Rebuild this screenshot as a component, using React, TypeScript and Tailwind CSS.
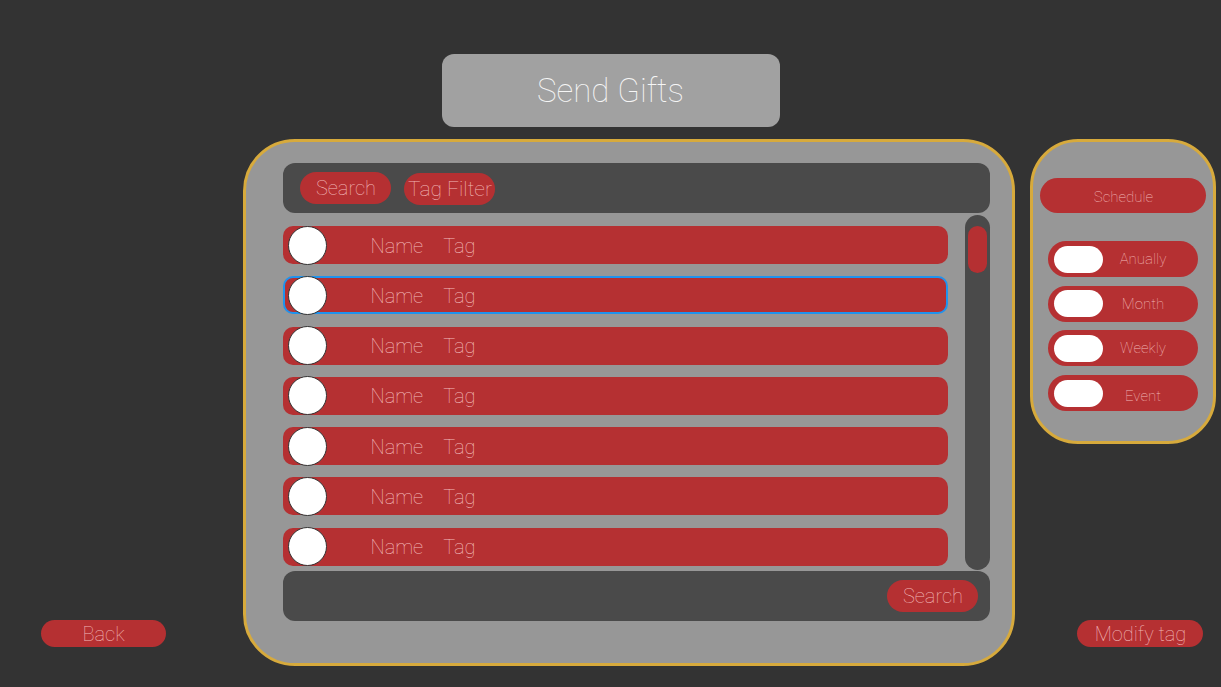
import React from "react";

const rows = [0, 1, 2, 3, 4, 5, 6];
const toggles = ["Anually", "Month", "Weekly", "Event"];

export default function App() {
  return (
    <div
      className="w-full h-[687px] bg-[#333333] flex flex-col overflow-hidden"
      style={{ fontFamily: "'Roboto Thin', 'Roboto Light', Roboto, 'Noto Sans', sans-serif" }}
    >
      <div className="flex justify-center pt-[54px]">
        <div className="w-[338px] h-[73px] rounded-[12px] bg-[#a1a1a1] flex items-center justify-center">
          <span className="text-[33px] font-thin text-[#f6f6f6] leading-none">Send Gifts</span>
        </div>
      </div>

      <div className="flex flex-row items-start mt-[12px]">
        {/* left column */}
        <div className="w-[244px] h-[527px] flex flex-col justify-end pb-[19px] pl-[41px]">
          <button className="w-[125px] h-[27px] rounded-full bg-[#b53032] text-[#f0b6b6] text-[20px] font-thin leading-none flex items-center justify-center">
            Back
          </button>
        </div>

        {/* main panel */}
        <div className="w-[772px] h-[527px] rounded-[52px] border-[3px] border-[#d7aa3c] bg-[#979797] pl-[37px] pr-[22px] pt-[21px] flex flex-col">
          <div className="h-[50px] rounded-[12px] bg-[#4a4a4a] flex items-start pt-[9px] pl-[17px] gap-[13px]">
            <button className="w-[91px] h-[32px] rounded-full bg-[#b53032] text-[#f0b6b6] text-[20px] font-thin leading-none flex items-center justify-center">
              Search
            </button>
            <button className="w-[91px] h-[32px] mt-[1px] rounded-full bg-[#b53032] text-[#f0b6b6] text-[21px] font-thin leading-none flex items-center justify-center">
              Tag Filter
            </button>
          </div>

          <div className="flex flex-row gap-[17px] h-[358px]">
            <div className="w-[666px] flex flex-col gap-[12.3px] pt-[13px]">
              {rows.map((i) => (
                <div
                  key={i}
                  className={
                    i === 1
                      ? "h-[38px] rounded-[10px] bg-[#b53032] border-2 border-[#1f93ee] flex items-center pl-[3px]"
                      : "h-[38px] rounded-[10px] bg-[#b53032] border-2 border-transparent flex items-center pl-[3px]"
                  }
                >
                  <div className="w-[39px] h-[39px] shrink-0 rounded-full bg-white border border-[#333]" />
                  <span className="ml-[43px] pt-[1px] text-[20px] font-thin text-[#f2baba] leading-none">Name</span>
                  <span className="ml-[20px] pt-[1px] text-[20px] font-thin text-[#f2baba] leading-none">Tag</span>
                </div>
              ))}
            </div>
            <div className="w-[26px] h-[355px] mt-[2px] rounded-full bg-[#4a4a4a] pt-[11px] px-[3px]">
              <div className="h-[47px] rounded-full bg-[#b53032]" />
            </div>
          </div>

          <div className="h-[50px] rounded-[12px] bg-[#4a4a4a] flex justify-end items-start pt-[9px] pr-[12px]">
            <button className="w-[91px] h-[32px] rounded-full bg-[#b53032] text-[#f0b6b6] text-[20px] font-thin leading-none flex items-center justify-center">
              Search
            </button>
          </div>
        </div>

        {/* right column */}
        <div className="ml-[15px] w-[191px] h-[527px] flex flex-col justify-between pb-[19px]">
          <div className="w-[186px] h-[305px] rounded-[48px] border-[3px] border-[#d7aa3c] bg-[#979797] pt-[36px] pl-[7px] flex flex-col">
            <button className="w-[166px] h-[35px] pt-[4px] rounded-full bg-[#b53032] text-[#f0b6b6] text-[15px] font-thin leading-none flex items-center justify-center">
              Schedule
            </button>
            <div className="flex flex-col gap-[8.7px] mt-[28px] pl-[8px]">
              {toggles.map((t) => (
                <div key={t} className="w-[150px] h-[36px] rounded-full bg-[#b53032] flex items-center pl-[6px]">
                  <div className="w-[49px] h-[27px] rounded-full bg-white shrink-0" />
                  <span
                    className={
                      t === "Event"
                        ? "flex-1 text-center pr-[16px] pt-[6px] text-[15px] font-thin text-[#f0b6b6] leading-none"
                        : "flex-1 text-center pr-[16px] pt-[1px] text-[15px] font-thin text-[#f0b6b6] leading-none"
                    }
                  >
                    {t}
                  </span>
                </div>
              ))}
            </div>
          </div>
          <button className="ml-[47px] w-[126px] h-[27px] rounded-full bg-[#b53032] text-[#f0b6b6] text-[20px] font-thin leading-none flex items-center justify-center">
            Modify tag
          </button>
        </div>
      </div>
    </div>
  );
}
